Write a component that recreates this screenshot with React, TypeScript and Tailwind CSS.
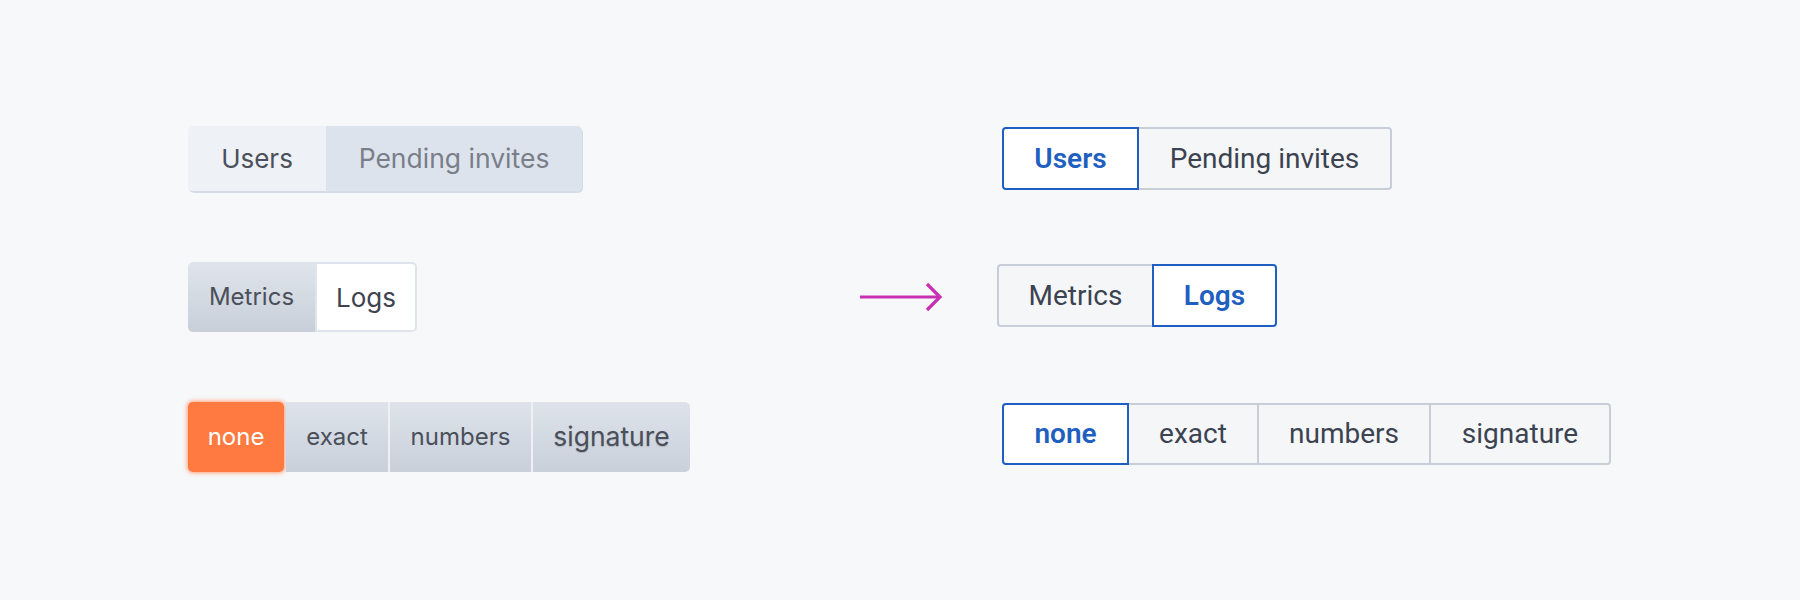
import React from "react";

const inter = { fontFamily: "Inter, 'Noto Sans', sans-serif" };
const roboto = { fontFamily: "Roboto, 'Noto Sans', sans-serif" };

function Arrow() {
  return (
    <svg width="84" height="30" viewBox="0 0 84 30" className="block">
      <line x1="0" y1="15" x2="80" y2="15" stroke="#c92fb2" strokeWidth="3.2" />
      <polyline points="67,2 80,15 67,28" fill="none" stroke="#c92fb2" strokeWidth="3.2" />
    </svg>
  );
}

export default function App() {
  return (
    <div className="w-[1800px] h-[600px] bg-[#f7f8fa] pt-[126px] pl-[188px] flex flex-col">
      {/* Row 1 */}
      <div className="flex items-start h-[65px]">
        <div className="w-[814px] shrink-0">
          <div
            className="inline-flex h-[65px] rounded-[5px] overflow-hidden shadow-[1px_2px_0_#d6dce6]"
            style={inter}
          >
            <div className="w-[138px] flex items-center justify-center bg-[#eef1f5] text-[26px] text-[#4b505b]">
              Users
            </div>
            <div className="w-[256px] flex items-center justify-center bg-[#dde3ec] text-[26.5px] text-[#797e89]">
              Pending invites
            </div>
          </div>
        </div>
        <div className="mt-[1px] flex h-[63px] shrink-0" style={roboto}>
          <div className="w-[137px] flex items-center justify-center bg-white border-2 border-[#1f5fc4] rounded-l-[4px] text-[28px] font-semibold text-[#1f5fbf]">
            Users
          </div>
          <div className="w-[253px] flex items-center justify-center bg-[#f5f6f8] border-2 border-l-0 border-[#c8ced8] rounded-r-[4px] text-[28px] text-[#3c4350]">
            Pending invites
          </div>
        </div>
      </div>

      {/* Row 2 */}
      <div className="mt-[71px] flex items-center h-[70px]">
        <div className="w-[672px] shrink-0">
          <div className="inline-flex h-[70px]" style={inter}>
            <div className="w-[127px] flex items-center justify-center rounded-l-[5px] bg-gradient-to-b from-[#e0e5ec] to-[#c8cfd9] text-[24px] text-[#4a4f5a]">
              Metrics
            </div>
            <div className="w-[102px] flex items-center justify-center bg-white border-2 border-[#dfe4ec] rounded-r-[5px] text-[26px] text-[#3d4350]">
              Logs
            </div>
          </div>
        </div>
        <div className="w-[137px] shrink-0 flex items-center">
          <Arrow />
        </div>
        <div className="flex h-[63px] -mt-[3px] shrink-0" style={roboto}>
          <div className="w-[155px] flex items-center justify-center bg-[#f5f6f8] border-2 border-r-0 border-[#c8ced8] rounded-l-[4px] text-[28px] text-[#3c4350]">
            Metrics
          </div>
          <div className="w-[125px] flex items-center justify-center bg-white border-2 border-[#1f5fc4] rounded-r-[4px] text-[28px] font-semibold text-[#1f5fbf]">
            Logs
          </div>
        </div>
      </div>

      {/* Row 3 */}
      <div className="mt-[70px] flex items-start h-[70px]">
        <div className="w-[814px] shrink-0">
          <div className="inline-flex h-[70px] gap-[2px] bg-[#eef0f3] rounded-[6px]" style={inter}>
            <div className="w-[96px] flex items-center justify-center rounded-[5px] bg-[#ff7a40] shadow-[0_0_4px_1px_#ffa079] text-[24px] text-white">
              none
            </div>
            <div className="w-[102px] flex items-center justify-center bg-gradient-to-b from-[#dee3eb] to-[#c9d0da] text-[24px] text-[#4a4f5a]">
              exact
            </div>
            <div className="w-[141px] flex items-center justify-center bg-gradient-to-b from-[#dee3eb] to-[#c9d0da] text-[24px] text-[#4a4f5a]">
              numbers
            </div>
            <div className="w-[157px] flex items-center justify-center rounded-r-[5px] bg-gradient-to-b from-[#dee3eb] to-[#c9d0da] text-[26.5px] text-[#4a4f5a] [text-shadow:0_1px_1px_rgba(0,0,0,0.15)]">
              signature
            </div>
          </div>
        </div>
        <div className="flex h-[62px] mt-[1px] shrink-0" style={roboto}>
          <div className="w-[127px] flex items-center justify-center bg-white border-2 border-[#1f5fc4] rounded-l-[4px] text-[28px] font-semibold text-[#1f5fbf]">
            none
          </div>
          <div className="w-[130px] flex items-center justify-center bg-[#f5f6f8] border-2 border-l-0 border-[#c8ced8] text-[28px] text-[#3c4350]">
            exact
          </div>
          <div className="w-[172px] flex items-center justify-center bg-[#f5f6f8] border-2 border-l-0 border-[#c8ced8] text-[28px] text-[#3c4350]">
            numbers
          </div>
          <div className="w-[180px] flex items-center justify-center bg-[#f5f6f8] border-2 border-l-0 border-[#c8ced8] rounded-r-[4px] text-[28px] text-[#3c4350]">
            signature
          </div>
        </div>
      </div>
    </div>
  );
}
